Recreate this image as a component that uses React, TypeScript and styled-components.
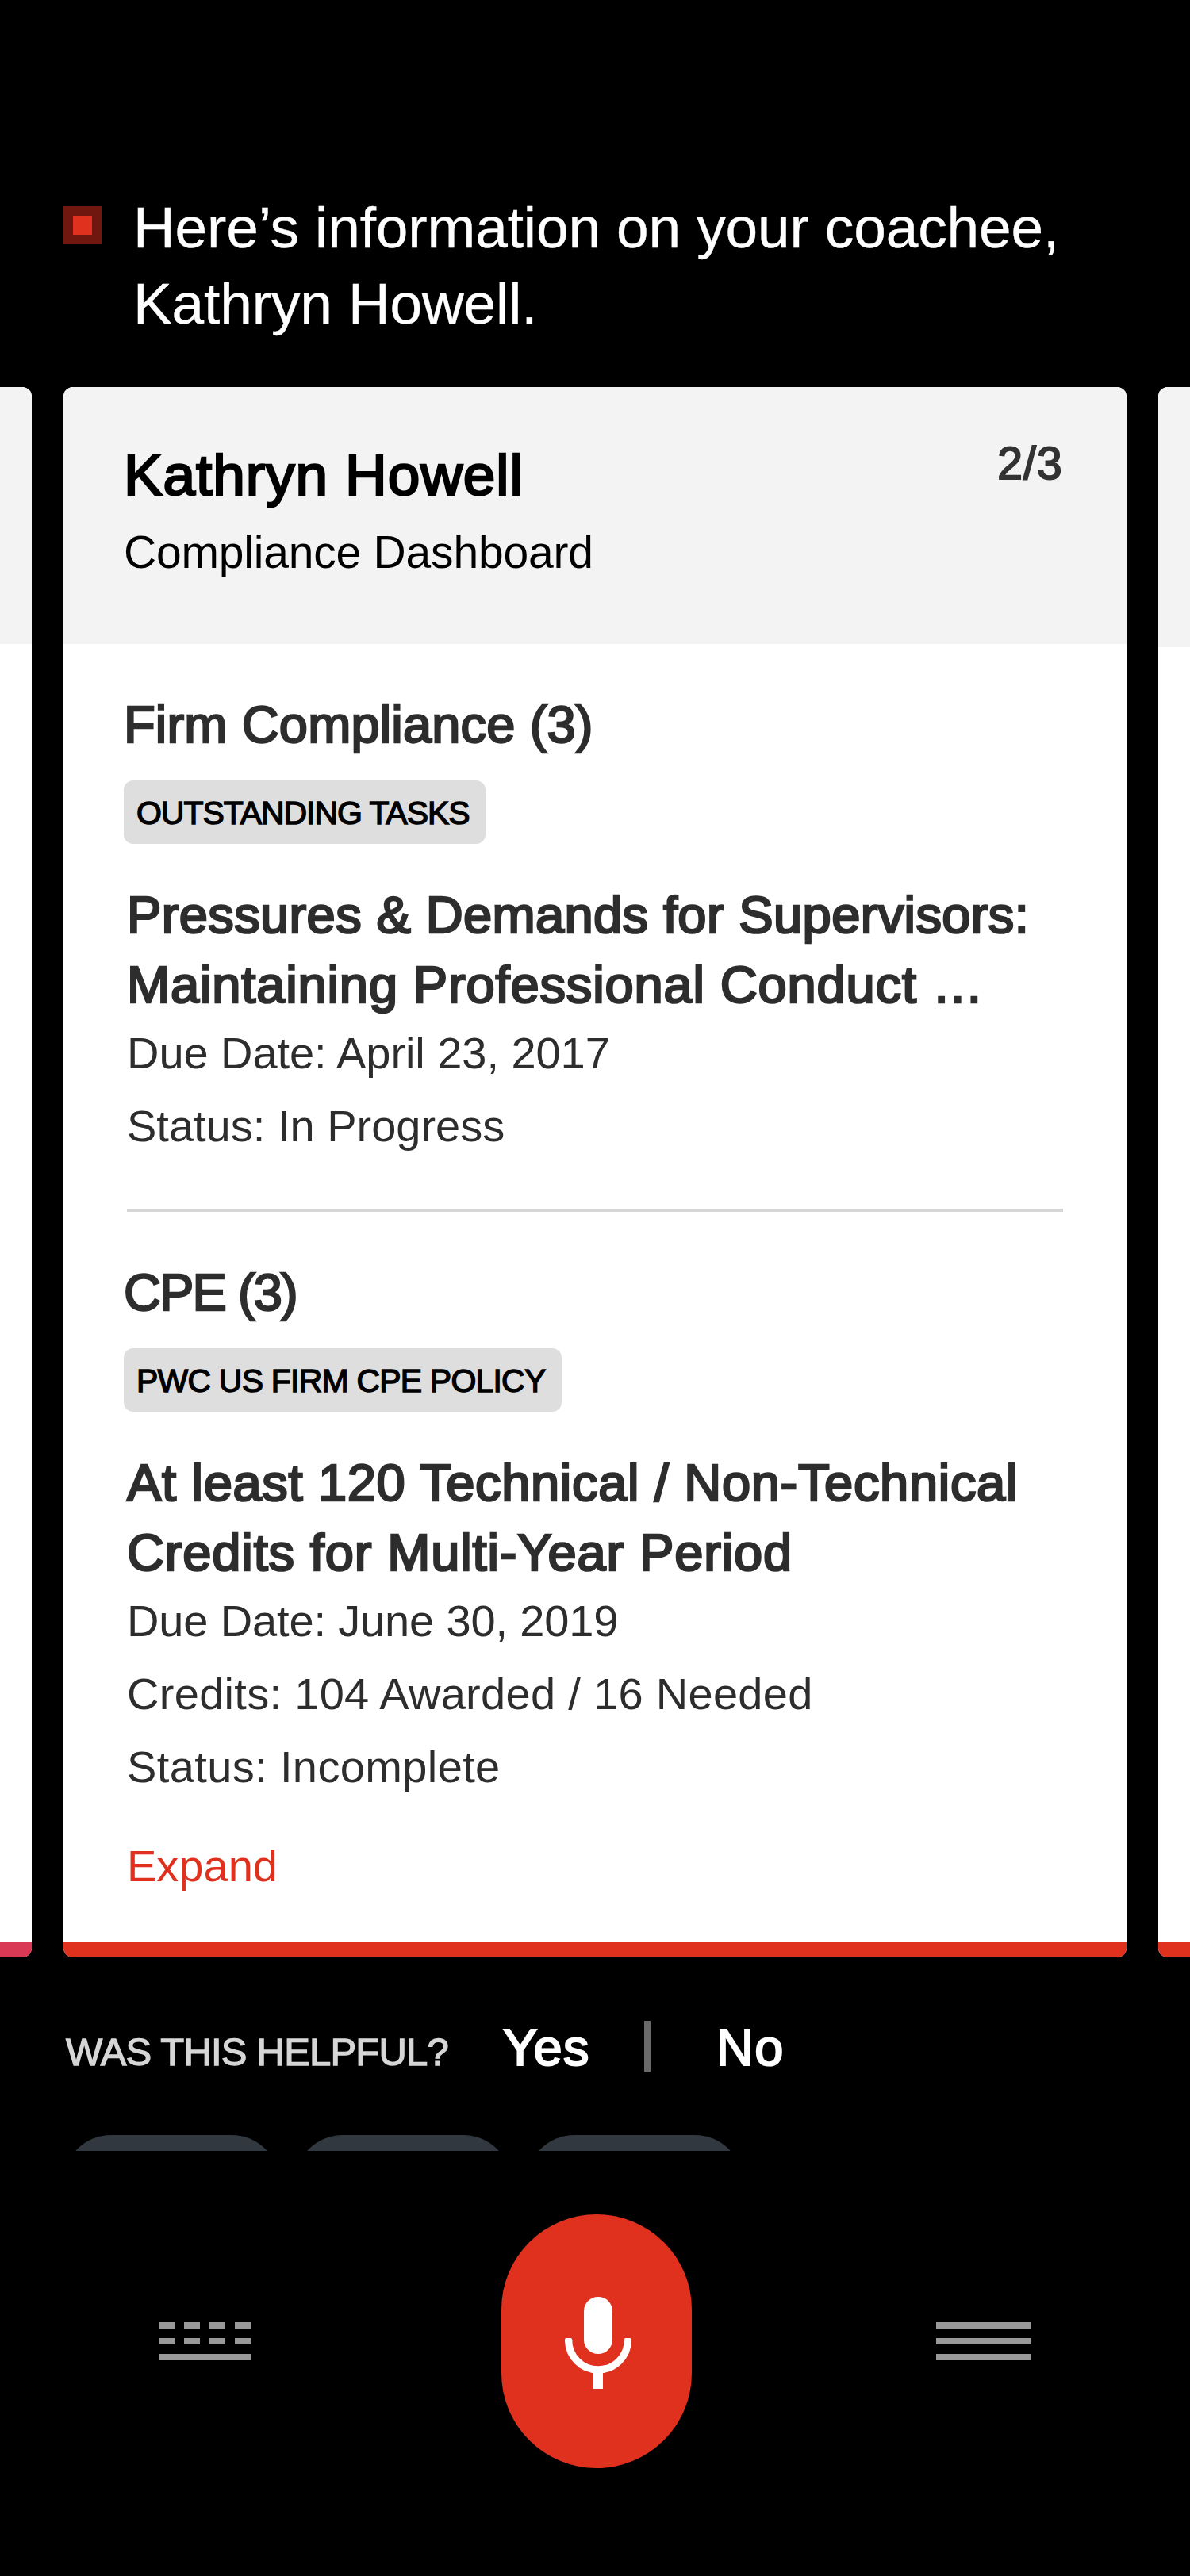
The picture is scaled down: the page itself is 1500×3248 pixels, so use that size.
import React from "react";
import styled, { createGlobalStyle } from "styled-components";

const GlobalStyle = createGlobalStyle`
  * { box-sizing: border-box; }
  html, body { margin: 0; padding: 0; background: #000; }
  body { font-family: "Liberation Sans", Arial, Helvetica, sans-serif; }
  h1, h2, h3, p { margin: 0; font-weight: 400; }
  button { border: 0; padding: 0; background: none; font: inherit; color: inherit; }
`;

const Screen = styled.main`
  width: 1500px;
  height: 3248px;
  display: flex;
  flex-direction: column;
  background: #000;
  overflow: hidden;
`;

const Prompt = styled.header`
  flex: none;
  height: 488px;
  padding: 239px 80px 0;
  display: flex;
  gap: 40px;
`;

const Marker = styled.span`
  flex: none;
  width: 48px;
  height: 48px;
  margin-top: 21px;
  border: 12px solid #70180f;
  background: #e0301e;
`;

const PromptText = styled.p`
  color: #fff;
  font-size: 73px;
  line-height: 96px;
  letter-spacing: -0.12px;
  white-space: nowrap;
  -webkit-text-stroke: 0.4px currentColor;
`;

const Carousel = styled.section`
  flex: none;
  display: flex;
  gap: 40px;
  height: 1980px;
  margin-left: -1300px;
`;

const Card = styled.article<{ $accent: string }>`
  flex: none;
  width: 1340px;
  border-radius: 12px;
  overflow: hidden;
  display: flex;
  flex-direction: column;
  background: #fff;
  &::after {
    content: "";
    height: 20px;
    margin-top: auto;
    background: ${(p) => p.$accent};
  }
`;

const CardHeader = styled.div<{ $height?: number }>`
  flex: none;
  display: flex;
  justify-content: space-between;
  align-items: flex-start;
  height: ${(p) => p.$height ?? 324}px;
  padding: 60px 80px 0 76px;
  background: #f3f3f3;
`;

const Heading = styled.div`
  padding-top: 3px;
`;

const Name = styled.h1`
  color: #000;
  font-size: 73px;
  line-height: 96px;
  letter-spacing: 0.9px;
  -webkit-text-stroke: 2.6px currentColor;
`;

const Subtitle = styled.p`
  margin-top: 13px;
  color: #000;
  font-size: 57px;
  line-height: 72px;
  letter-spacing: -0.2px;
`;

const Counter = styled.span`
  color: #333;
  font-size: 57px;
  line-height: 72px;
  letter-spacing: 1.2px;
  -webkit-text-stroke: 2px currentColor;
`;

const CardBody = styled.div`
  padding: 0 80px 0 76px;
  color: #2d2d2d;
`;

const Section = styled.section`
  padding-top: 62px;
`;

const SectionTitle = styled.h2<{ $tracking: number }>`
  font-size: 65px;
  line-height: 80px;
  letter-spacing: ${(p) => p.$tracking}px;
  -webkit-text-stroke: 2.4px currentColor;
`;

const Tag = styled.div<{ $width: number; $tracking: number }>`
  display: flex;
  align-items: center;
  width: ${(p) => p.$width}px;
  height: 80px;
  margin-top: 30px;
  padding: 3px 0 0 16px;
  border-radius: 12px;
  background: #dedede;
  color: #000;
  font-size: 41px;
  white-space: nowrap;
  letter-spacing: ${(p) => p.$tracking}px;
  -webkit-text-stroke: 1.4px currentColor;
`;

const Item = styled.div`
  margin: 46px 0 0 4px;
`;

const ItemTitle = styled.h3<{ $tracking: number }>`
  font-size: 65px;
  line-height: 88px;
  letter-spacing: ${(p) => p.$tracking}px;
  white-space: nowrap;
  -webkit-text-stroke: 2.6px currentColor;
`;

const MetaList = styled.div`
  margin-top: -4px;
`;

const Meta = styled.p<{ $tracking: number }>`
  font-size: 56px;
  line-height: 92px;
  letter-spacing: ${(p) => p.$tracking}px;
`;

const Divider = styled.hr`
  height: 4px;
  margin: 58px 0 0 4px;
  border: 0;
  background: #d6d6d6;
`;

const Expand = styled.button`
  display: block;
  margin: 43px 0 0 4px;
  color: #e0301e;
  font-size: 56px;
  line-height: 72px;
`;

const Feedback = styled.section`
  flex: none;
  height: 224px;
  padding: 80px 0 0 83px;
  display: flex;
  align-items: flex-start;
`;

const Question = styled.span`
  width: 551px;
  margin-top: 7px;
  color: #d6d6d6;
  font-size: 49px;
  line-height: 64px;
  letter-spacing: -0.8px;
  -webkit-text-stroke: 1.3px currentColor;
`;

const Answer = styled.button<{ $width: number }>`
  width: ${(p) => p.$width}px;
  margin-top: 2px;
  color: #fff;
  font-size: 65px;
  line-height: 64px;
  letter-spacing: 1.2px;
  text-align: left;
  -webkit-text-stroke: 2.2px currentColor;
`;

const AnswerDivider = styled.span`
  width: 8px;
  height: 64px;
  margin-right: 83px;
  background: #696969;
`;

const Chips = styled.div`
  flex: none;
  height: 20px;
  padding-left: 80px;
  display: flex;
  gap: 20px;
  overflow: hidden;
`;

const Chip = styled.span`
  width: 272px;
  height: 120px;
  border-radius: 60px;
  background: #31383f;
`;

const BottomBar = styled.nav`
  flex: none;
  height: 480px;
  padding: 0 200px;
  display: flex;
  align-items: center;
`;

const MicButton = styled.button`
  width: 240px;
  height: 320px;
  margin: 0 308px 0 316px;
  border-radius: 120px;
  background: #e0301e;
`;

const Glyph = styled.svg`
  display: block;
`;

const KeyboardIcon = () => (
  <Glyph width="116" height="48" viewBox="0 0 116 48" fill="#999">
    {[0, 20].map((y) =>
      [0, 32, 64, 96].map((x) => <rect key={`${x}-${y}`} x={x} y={y} width="20" height="8" />)
    )}
    <rect y="40" width="116" height="8" />
  </Glyph>
);

const MenuIcon = () => (
  <Glyph width="120" height="48" viewBox="0 0 120 48" fill="#999">
    <rect width="120" height="8" />
    <rect y="20" width="120" height="8" />
    <rect y="40" width="120" height="8" />
  </Glyph>
);

const MicIcon = () => (
  <Glyph width="240" height="320" viewBox="0 0 240 320" fill="#fff">
    <rect x="104" y="104" width="36" height="72" rx="18" />
    <path d="M84.6 158.5a37.4 37.4 0 0 0 74.8 0" fill="none" stroke="#fff" strokeWidth="9.2" />
    <rect x="80" y="156" width="9.2" height="6" rx="2" />
    <rect x="154.8" y="156" width="9.2" height="6" rx="2" />
    <rect x="116" y="198" width="12" height="22" />
  </Glyph>
);

type Line = { text: string; tracking: number };

type Task = {
  title: Line;
  tag: Line & { width: number };
  lines: Line[];
  meta: Line[];
};

const tasks: Task[] = [
  {
    title: { text: "Firm Compliance (3)", tracking: 0.15 },
    tag: { text: "OUTSTANDING TASKS", tracking: -1.05, width: 456 },
    lines: [
      { text: "Pressures & Demands for Supervisors:", tracking: 0.38 },
      { text: "Maintaining Professional Conduct …", tracking: 0.86 },
    ],
    meta: [
      { text: "Due Date: April 23, 2017", tracking: -0.06 },
      { text: "Status: In Progress", tracking: 0 },
    ],
  },
  {
    title: { text: "CPE (3)", tracking: -1.9 },
    tag: { text: "PWC US FIRM CPE POLICY", tracking: -0.8, width: 552 },
    lines: [
      { text: "At least 120 Technical / Non-Technical", tracking: 0.68 },
      { text: "Credits for Multi-Year Period", tracking: 0.86 },
    ],
    meta: [
      { text: "Due Date: June 30, 2019", tracking: -0.15 },
      { text: "Credits: 104 Awarded / 16 Needed", tracking: 0.3 },
      { text: "Status: Incomplete", tracking: 0.38 },
    ],
  },
];

export default function App() {
  return (
    <>
      <GlobalStyle />
      <Screen>
        <Prompt>
          <Marker />
          <PromptText>
            Here’s information on your coachee,
            <br />
            Kathryn Howell.
          </PromptText>
        </Prompt>
        <Carousel>
          <Card $accent="#d93954">
            <CardHeader />
          </Card>
          <Card $accent="#e0301e">
            <CardHeader>
              <Heading>
                <Name>Kathryn Howell</Name>
                <Subtitle>Compliance Dashboard</Subtitle>
              </Heading>
              <Counter>2/3</Counter>
            </CardHeader>
            <CardBody>
              {tasks.map((task, index) => (
                <React.Fragment key={task.title.text}>
                  {index > 0 && <Divider />}
                  <Section>
                    <SectionTitle $tracking={task.title.tracking}>{task.title.text}</SectionTitle>
                    <Tag $width={task.tag.width} $tracking={task.tag.tracking}>
                      {task.tag.text}
                    </Tag>
                    <Item>
                      {task.lines.map((line) => (
                        <ItemTitle key={line.text} $tracking={line.tracking}>
                          {line.text}
                        </ItemTitle>
                      ))}
                      <MetaList>
                        {task.meta.map((line) => (
                          <Meta key={line.text} $tracking={line.tracking}>
                            {line.text}
                          </Meta>
                        ))}
                      </MetaList>
                    </Item>
                  </Section>
                </React.Fragment>
              ))}
              <Expand>Expand</Expand>
            </CardBody>
          </Card>
          <Card $accent="#e0301e">
            <CardHeader $height={328} />
          </Card>
        </Carousel>
        <Feedback>
          <Question>WAS THIS HELPFUL?</Question>
          <Answer $width={178}>Yes</Answer>
          <AnswerDivider />
          <Answer $width={90}>No</Answer>
        </Feedback>
        <Chips>
          <Chip />
          <Chip />
          <Chip />
        </Chips>
        <BottomBar>
          <KeyboardIcon />
          <MicButton aria-label="Speak">
            <MicIcon />
          </MicButton>
          <MenuIcon />
        </BottomBar>
      </Screen>
    </>
  );
}
